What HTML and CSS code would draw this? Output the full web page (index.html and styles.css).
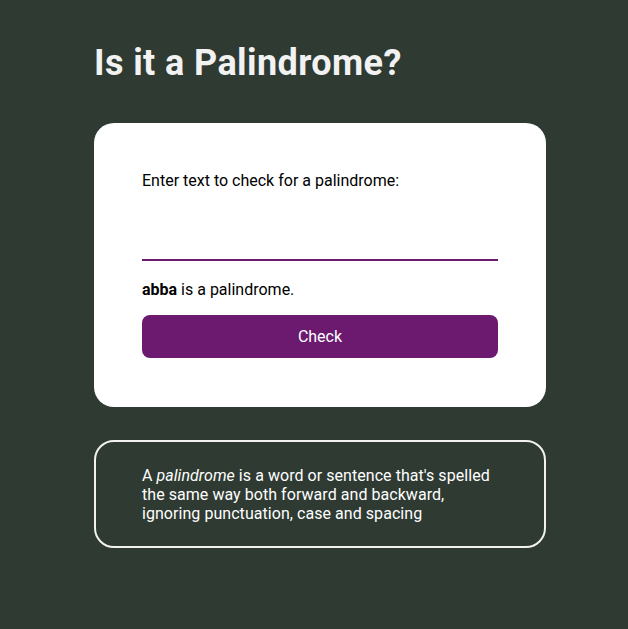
FILE: index.html
```html
<!DOCTYPE html>
<html lang="en">
<head>
<meta charset="utf-8">
<title>Is it a Palindrome?</title>
<link rel="stylesheet" href="styles.css">
</head>
<body>
<main class="page">
  <h1 class="title">Is it a Palindrome?</h1>
  <section class="card">
    <label class="label" for="text-input">Enter text to check for a palindrome:</label>
    <input class="text-input" id="text-input" type="text">
    <p class="result"><strong>abba</strong> is a palindrome.</p>
    <button class="check-btn" type="button">Check</button>
  </section>
  <section class="info">
    <p class="info-text">A <em>palindrome</em> is a word or sentence that's spelled the same way both forward and backward, ignoring punctuation, case and spacing</p>
  </section>
</main>
</body>
</html>
```

FILE: styles.css
```css
* { box-sizing: border-box; }
html, body {
  margin: 0;
  padding: 0;
  background: #2e3a32;
  font-family: Roboto, "Liberation Sans", sans-serif;
}
.page {
  padding: 42px 0 0 94px;
  width: 546px;
  display: flex;
  flex-direction: column;
}
.title {
  margin: 0;
  font-size: 36px;
  font-weight: 700;
  color: #f2f2f2;
  line-height: 42px;
  letter-spacing: 0.4px;
}
.card {
  margin-top: 39px;
  background: #fff;
  border-radius: 20px;
  padding: 48px 48px 49px;
  display: flex;
  flex-direction: column;
}
.label {
  font-size: 16px;
  line-height: 19px;
  color: #000;
}
.text-input {
  margin-top: 19px;
  height: 52px;
  border: none;
  border-bottom: 2px solid #6b1a70;
  outline: none;
  font-size: 16px;
  font-family: inherit;
  padding: 0;
  background: transparent;
}
.result {
  margin: 19px 0 0;
  font-size: 16px;
  line-height: 19px;
  color: #000;
}
.result strong { font-weight: 700; }
.check-btn {
  margin-top: 16px;
  height: 43px;
  border: none;
  border-radius: 8px;
  background: #6b1a70;
  color: #fff;
  font-family: inherit;
  font-size: 16px;
}
.info {
  margin-top: 33px;
  border: 2px solid #f2f2f2;
  border-radius: 20px;
  padding: 24px 46px 23px;
}
.info-text {
  margin: 0;
  color: #fff;
  font-size: 16px;
  line-height: 19px;
  letter-spacing: 0.05px;
}
```
